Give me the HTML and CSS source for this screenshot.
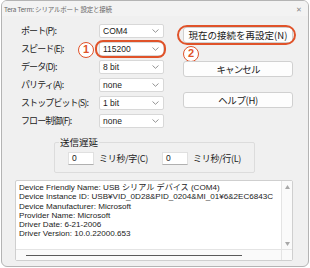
FILE: index.html
```
<!DOCTYPE html>
<html lang="ja">
<head>
    <meta charset="UTF-8">
    <title>Tera Term: シリアルポート 設定と接続</title>
    <link rel="stylesheet" href="styles.css">
</head>
<body>
    <div class="window">
        <div class="titlebar">
            <span class="title">Tera Term: シリアルポート 設定と接続</span>
            <span class="close">✕</span>
        </div>

        <div class="main">
            <div class="top">
                <div class="fields">
                    <label>ポート(P):</label>
                    <div class="combo"><span>COM4</span><svg width="7" height="4" viewBox="0 0 7 4"><path d="M0.5 0.5 L3.5 3.3 L6.5 0.5" fill="none" stroke="#888" stroke-width="0.9"/></svg></div>

                    <label>スピード(E):</label>
                    <div class="combo marked">
                        <span>115200</span><svg width="7" height="4" viewBox="0 0 7 4"><path d="M0.5 0.5 L3.5 3.3 L6.5 0.5" fill="none" stroke="#888" stroke-width="0.9"/></svg>
                        <div class="oval combo-oval"></div>
                        <div class="badge badge-1">1</div>
                    </div>

                    <label>データ(D):</label>
                    <div class="combo"><span>8 bit</span><svg width="7" height="4" viewBox="0 0 7 4"><path d="M0.5 0.5 L3.5 3.3 L6.5 0.5" fill="none" stroke="#888" stroke-width="0.9"/></svg></div>

                    <label>パリティ(A):</label>
                    <div class="combo"><span>none</span><svg width="7" height="4" viewBox="0 0 7 4"><path d="M0.5 0.5 L3.5 3.3 L6.5 0.5" fill="none" stroke="#888" stroke-width="0.9"/></svg></div>

                    <label>ストップビット(S):</label>
                    <div class="combo"><span>1 bit</span><svg width="7" height="4" viewBox="0 0 7 4"><path d="M0.5 0.5 L3.5 3.3 L6.5 0.5" fill="none" stroke="#888" stroke-width="0.9"/></svg></div>

                    <label>フロー制御(F):</label>
                    <div class="combo"><span>none</span><svg width="7" height="4" viewBox="0 0 7 4"><path d="M0.5 0.5 L3.5 3.3 L6.5 0.5" fill="none" stroke="#888" stroke-width="0.9"/></svg></div>
                </div>

                <div class="buttons">
                    <div class="btn btn-reset">
                        現在の接続を再設定(N)
                        <div class="oval btn-oval"></div>
                        <div class="badge badge-2">2</div>
                    </div>
                    <div class="btn btn-cancel">キャンセル</div>
                    <div class="btn btn-help">ヘルプ(H)</div>
                </div>
            </div>

            <fieldset class="delay">
                <legend>送信遅延</legend>
                <div class="delay-row">
                    <div class="num">0</div>
                    <span>ミリ秒/字(C)</span>
                    <div class="num">0</div>
                    <span>ミリ秒/行(L)</span>
                </div>
            </fieldset>

            <div class="info">
                <div class="info-text">
                    <div>Device Friendly Name: USB シリアル デバイス (COM4)</div>
                    <div>Device Instance ID: USB¥VID_0D28&amp;PID_0204&amp;MI_01¥6&amp;2EC6843C</div>
                    <div>Device Manufacturer: Microsoft</div>
                    <div>Provider Name: Microsoft</div>
                    <div>Driver Date: 6-21-2006</div>
                    <div>Driver Version: 10.0.22000.653</div>
                </div>
                <div class="vscroll">
                    <svg width="5" height="4" viewBox="0 0 5 4"><path d="M2.5 0 L5 4 L0 4 Z" fill="#a8a8a8"/></svg>
                    <svg width="5" height="4" viewBox="0 0 5 4"><path d="M0 0 L5 0 L2.5 4 Z" fill="#a8a8a8"/></svg>
                </div>
                <div class="hscroll"><div class="thumb"></div></div>
                <div class="corner"></div>
            </div>
        </div>
    </div>
</body>
</html>
```

FILE: styles.css
```
* {
    margin: 0;
    padding: 0;
    box-sizing: border-box;
}

body {
    width: 310px;
    height: 268px;
    overflow: hidden;
    background: #ffffff;
    font-family: "Noto Sans CJK JP", "Noto Sans", sans-serif;
    font-size: 9.5px;
    color: #1a1a1a;
}

.window {
    width: 308px;
    height: 267px;
    margin-left: 1px;
    border: 1px solid #b4b4b4;
    border-radius: 6px;
    background: #f0f0f0;
    overflow: hidden;
}

.titlebar {
    height: 15px;
    display: flex;
    align-items: center;
    justify-content: space-between;
    padding: 0 6px 0 2px;
    background: #f3f3f3;
}

.title {
    font-size: 6.5px;
    color: #666;
    letter-spacing: -0.2px;
}

.close {
    font-size: 7px;
    color: #888;
}

.main {
    padding: 8px 15px 0 13px;
}

/* 上の部分 */
.top {
    display: flex;
    margin-left: 6px;
}

.fields {
    display: grid;
    grid-template-columns: 78px 65px;
    grid-auto-rows: 14px;
    row-gap: 4px;
    align-items: center;
}

.fields label {
    font-size: 9px;
    letter-spacing: -0.9px;
    line-height: 14px;
}

.combo {
    position: relative;
    height: 14px;
    display: flex;
    align-items: center;
    justify-content: space-between;
    padding: 0 4px 0 3px;
    background: #fff;
    border: 1px solid #d8d8d8;
    border-radius: 2px;
    font-family: "Liberation Sans", Arial, sans-serif;
    font-size: 8.5px;
}

.buttons {
    margin-left: 19px;
    width: 113px;
}

.btn {
    position: relative;
    height: 16px;
    display: flex;
    align-items: center;
    justify-content: center;
    background: #fdfdfd;
    border: 1px solid #d0d0d0;
    border-radius: 3px;
    font-size: 9.5px;
}

.btn-reset {
    margin-top: 3px;
}

.btn-cancel {
    margin-top: 18px;
    letter-spacing: -0.9px;
}

.btn-help {
    margin-top: 15px;
    letter-spacing: -0.4px;
}

/* 赤い印 */
.oval {
    position: absolute;
    border: 2px solid #e0532a;
    border-radius: 10px;
}

.combo-oval {
    top: -3px;
    left: -5px;
    right: -3px;
    bottom: -3px;
    border-radius: 8px;
}

.btn-oval {
    top: -3px;
    left: -7px;
    right: -4px;
    bottom: -3px;
}

.badge {
    position: absolute;
    width: 16px;
    height: 16px;
    border: 1.5px solid #e0532a;
    border-radius: 50%;
    background: #fff;
    color: #e0532a;
    font-family: "Liberation Sans", Arial, sans-serif;
    font-weight: bold;
    font-size: 11px;
    line-height: 13px;
    text-align: center;
}

.badge-1 {
    top: -1px;
    left: -22px;
}

.badge-2 {
    top: 18px;
    left: -1px;
}

/* 送信遅延 */
.delay {
    margin: 9px 0 0 39px;
    width: 201px;
    border: 1px solid #dcdcdc;
    border-radius: 2px;
    padding: 5px 0 7px 13px;
}

.delay legend {
    margin-left: -9px;
    padding: 0 1px;
    font-size: 9.5px;
    line-height: 10px;
}

.delay-row {
    display: grid;
    grid-template-columns: 26px 58px 26px auto;
    column-gap: 5px;
    align-items: center;
    font-size: 9px;
    letter-spacing: -0.3px;
}

.num {
    height: 13px;
    background: #fff;
    border: 1px solid #e0e0e0;
    border-bottom-color: #b0b0b0;
    padding-left: 3px;
    font-family: "Liberation Sans", Arial, sans-serif;
    font-size: 8.5px;
    line-height: 11px;
    letter-spacing: 0;
}

/* デバイス情報 */
.info {
    margin-top: 7px;
    height: 81px;
    display: grid;
    grid-template-columns: 1fr 11px;
    grid-template-rows: 1fr 11px;
    background: #fff;
    border: 1px solid #cfcfcf;
    border-radius: 2px;
}

.info-text {
    padding: 2px 3px;
    font-family: "Liberation Sans", Arial, "Noto Sans CJK JP", sans-serif;
    font-size: 8.1px;
    line-height: 9.3px;
    color: #222;
    white-space: nowrap;
    overflow: hidden;
}

.vscroll {
    display: flex;
    flex-direction: column;
    justify-content: space-between;
    align-items: center;
    padding: 4px 0 3px;
    border-left: 1px solid #e4e4e4;
    background: #fafafa;
}

.hscroll {
    display: flex;
    align-items: center;
    border-top: 1px solid #e4e4e4;
    background: #fafafa;
}

.thumb {
    margin-left: 10px;
    width: 216px;
    height: 1px;
    background: #5a5a5a;
}

.corner {
    background: #fafafa;
    border-left: 1px solid #e4e4e4;
    border-top: 1px solid #e4e4e4;
}
```
